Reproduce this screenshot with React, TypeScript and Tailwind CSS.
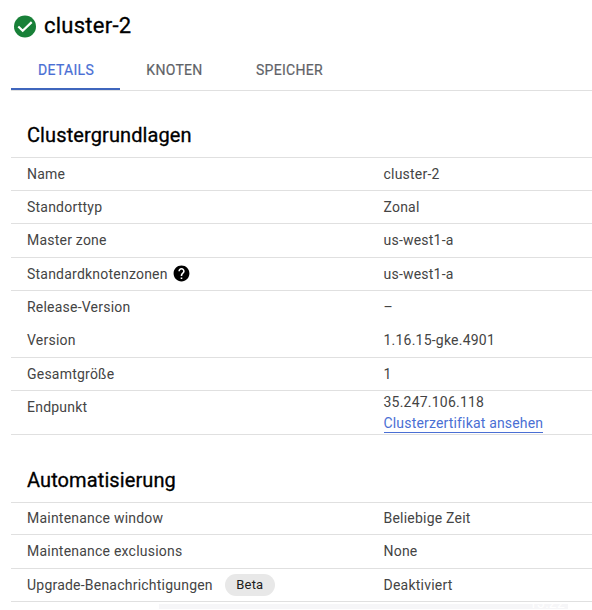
import React from "react";

type Row = { label: string; value: string; height: string; border?: boolean; help?: boolean; beta?: boolean };

const basics: Row[] = [
  { label: "Name", value: "cluster-2", height: "h-[33px]", border: true },
  { label: "Standorttyp", value: "Zonal", height: "h-[33px]", border: true },
  { label: "Master zone", value: "us-west1-a", height: "h-[34px]", border: true },
  { label: "Standardknotenzonen", value: "us-west1-a", height: "h-[33px]", border: true, help: true },
  { label: "Release-Version", value: "–", height: "h-[33px]" },
  { label: "Version", value: "1.16.15-gke.4901", height: "h-[34px]", border: true },
  { label: "Gesamtgröße", value: "1", height: "h-[33px]", border: true },
];

const automation: Row[] = [
  { label: "Maintenance window", value: "Beliebige Zeit", height: "h-[32px]", border: true },
  { label: "Maintenance exclusions", value: "None", height: "h-[34px]", border: true },
  { label: "Upgrade-Benachrichtigungen", value: "Deaktiviert", height: "h-[33px]", border: true, beta: true },
];

function HelpIcon() {
  return (
    <svg className="relative -top-px ml-[4px] size-[19px]" viewBox="0 0 24 24" fill="#000">
      <path d="M12 2C6.48 2 2 6.48 2 12s4.48 10 10 10 10-4.48 10-10S17.52 2 12 2zm1 17h-2v-2h2v2zm2.07-7.75l-.9.92C13.45 12.9 13 13.5 13 15h-2v-.5c0-1.1.45-2.1 1.17-2.83l1.24-1.26c.37-.36.59-.86.59-1.41 0-1.1-.9-2-2-2s-2 .9-2 2H8c0-2.21 1.79-4 4-4s4 1.79 4 4c0 .88-.36 1.68-.93 2.25z" />
    </svg>
  );
}

function TableRow({ row }: { row: Row }) {
  return (
    <div className={`flex items-center pl-4 ${row.height} ${row.border ? "border-b border-[#e0e0e0]" : ""}`}>
      <div className="flex w-[356px] items-center">
        <span>{row.label}</span>
        {row.help && <HelpIcon />}
        {row.beta && (
          <span className="ml-[12px] flex h-[22px] w-[50px] items-center justify-center rounded-full bg-[#e8e8e8] text-[13px] text-[#202020]">
            Beta
          </span>
        )}
      </div>
      <span className="pl-[0.5px]">{row.value}</span>
    </div>
  );
}

export default function App() {
  return (
    <div className="h-[610px] w-[592px] overflow-hidden bg-white pl-[11px] font-[Roboto,sans-serif] text-[14px] tracking-[0.22px] text-[#444]">
      <header className="flex h-[51px] items-center pl-[2px]">
        <svg className="size-6" viewBox="0 0 24 24">
          <circle cx="12" cy="12.5" r="11" fill="#188038" />
          <path d="M5.3 12.5l4.4 4.3 9-8.7" fill="none" stroke="#fff" strokeWidth="2.2" />
        </svg>
        <h1 className="ml-[7px] text-[22px] tracking-[0.25px] text-black [-webkit-text-stroke:0.3px]">cluster-2</h1>
      </header>
      <nav className="flex h-10 border-b border-[#e0e0e0] tracking-[0.3px] text-[#5f6368] [-webkit-text-stroke:0.2px]">
        <div className="flex h-[39px] w-[109px] items-center justify-center border-b-2 border-[#3f66bd] pt-px pl-px text-[#4a6fd4]">DETAILS</div>
        <div className="flex h-[38px] w-[109px] items-center justify-center">KNOTEN</div>
        <div className="flex h-[38px] w-[121px] items-center justify-center">SPEICHER</div>
      </nav>
      <section>
        <h2 className="flex h-[67px] items-center border-b border-[#e0e0e0] pt-[21px] pl-4 text-[20px] tracking-[0.1px] text-black [-webkit-text-stroke:0.3px]">
          Clustergrundlagen
        </h2>
        {basics.map((row) => <TableRow key={row.label} row={row} />)}
        <div className="flex h-11 border-b border-[#e0e0e0] pl-4">
          <span className="w-[356px] pt-[6px]">Endpunkt</span>
          <div className="flex flex-col items-start pl-[0.5px]">
            <span className="h-[22px] leading-[22px]">35.247.106.118</span>
            <a className="h-[20px] border-b border-[#4a6fd4] leading-[21px] tracking-[0.17px] text-[#4a6fd4]">Clusterzertifikat ansehen</a>
          </div>
        </div>
      </section>
      <section>
        <h2 className="flex h-[68px] items-center border-b border-[#e0e0e0] pt-[22px] pl-4 text-[20px] tracking-[0.1px] text-black [-webkit-text-stroke:0.3px]">
          Automatisierung
        </h2>
        {automation.map((row) => <TableRow key={row.label} row={row} />)}
      </section>
      <div className="mt-[2px] ml-[148px] flex h-[5px] w-[409px] items-end justify-end overflow-hidden bg-[#f6f6f8] pr-[3px]">
        <span className="text-[14px] leading-[12px] text-white">13:22</span>
      </div>
    </div>
  );
}
